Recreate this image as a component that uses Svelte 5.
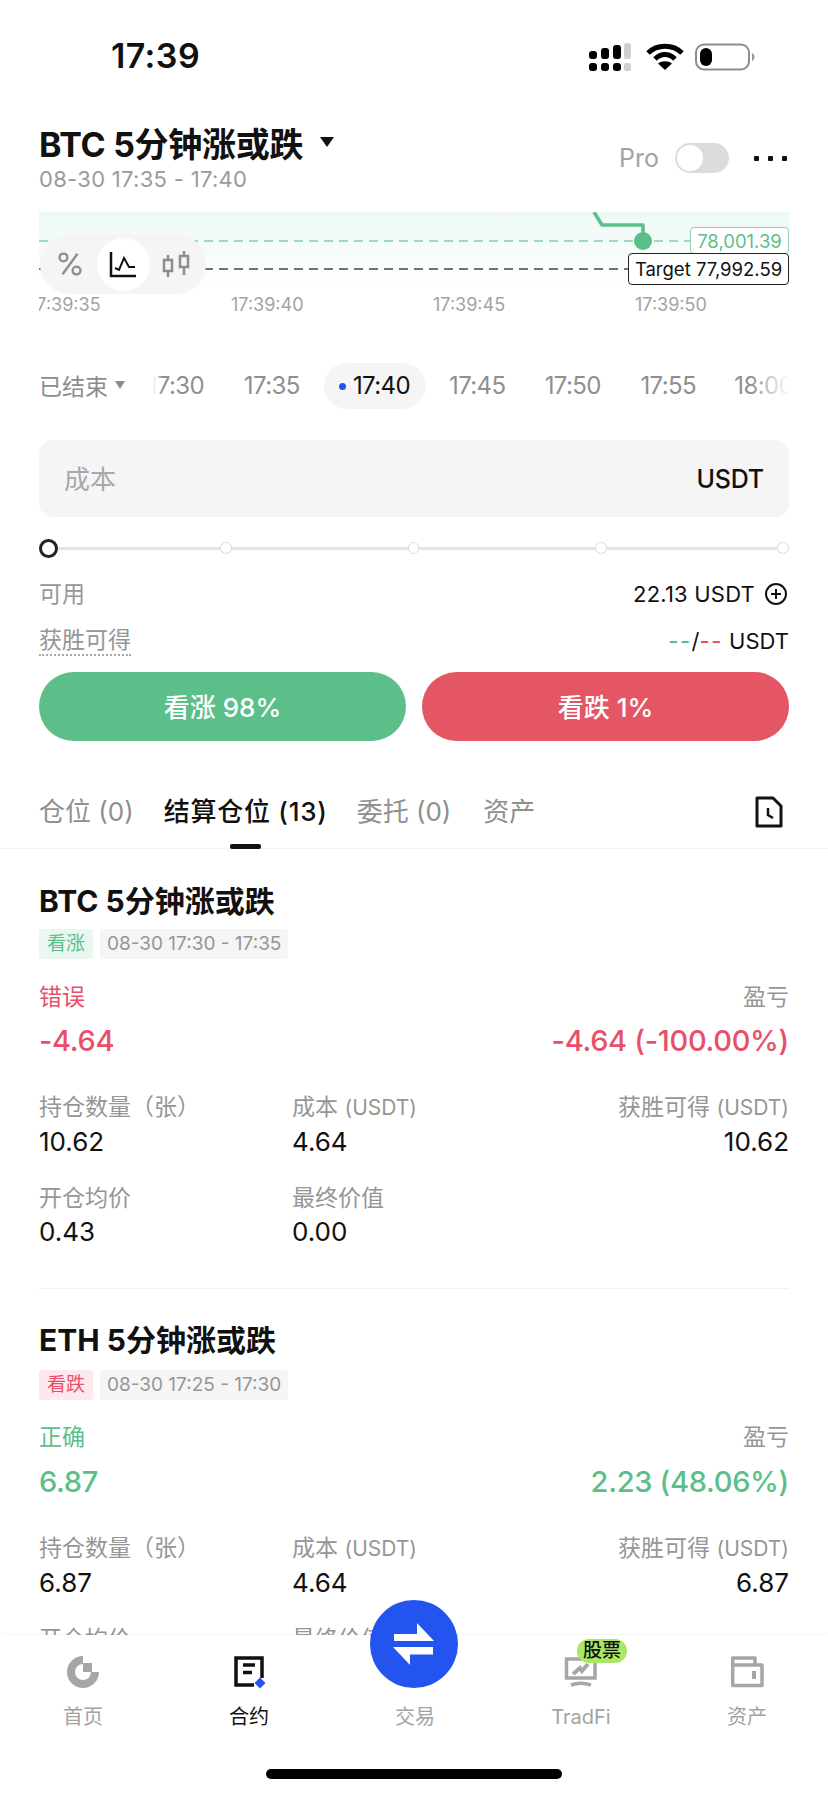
<script>
  const slots = ['17:30', '17:35', '17:40', '17:45', '17:50', '17:55', '18:00'];
  const axis = ['17:39:35', '17:39:40', '17:39:45', '17:39:50'];
  const cards = [
    { name: 'BTC 5分钟涨或跌', side: '看涨', sideCls: 'up', time: '08-30 17:30 - 17:35', result: '错误', tone: 'down', payout: '-4.64', pnl: '-4.64 (-100.00%)', qty: '10.62', cost: '4.64', win: '10.62', avg: '0.43', final: '0.00' },
    { name: 'ETH 5分钟涨或跌', side: '看跌', sideCls: 'down', time: '08-30 17:25 - 17:30', result: '正确', tone: 'up', payout: '6.87', pnl: '2.23 (48.06%)', qty: '6.87', cost: '4.64', win: '6.87', avg: '0.68', final: '6.87' }
  ];
</script>

<div class="screen">
  <div class="content">
    <div class="status">
      <span class="clock">17:39</span>
      <div class="status-icons">
        <svg class="signal" width="42" height="28" viewBox="0 0 42 28">
          <g fill="#000">
            <rect x="0" y="8" width="8" height="8" rx="3"/><rect x="12" y="5" width="8" height="11" rx="3"/><rect x="24" y="2" width="8" height="14" rx="3"/>
            <rect x="0" y="20" width="8" height="8" rx="3"/><rect x="12" y="20" width="8" height="8" rx="3"/><rect x="24" y="20" width="8" height="8" rx="3"/>
          </g>
          <g fill="#cfcfcf"><rect x="35" y="0" width="7" height="16" rx="2.5"/><rect x="35" y="20" width="7" height="8" rx="2"/></g>
        </svg>
        <svg width="38" height="28" viewBox="0 0 38 28">
          <path d="M2 10C11 1 27 1 36 10" fill="none" stroke="#000" stroke-width="5"/>
          <path d="M9 16C15 10 23 10 29 16" fill="none" stroke="#000" stroke-width="5"/>
          <path d="M19 27L12 20.5C16 17.5 22 17.5 26 20.5Z" fill="#000"/>
        </svg>
        <svg width="60" height="28" viewBox="0 0 60 28">
          <rect x="1" y="1.5" width="53" height="25" rx="8" fill="none" stroke="#8c8c8c" stroke-width="2"/>
          <rect x="5" y="5" width="12" height="18" rx="6" fill="#000"/>
          <path d="M57 10C59 11 59.500 12.500 59.500 14C59.500 15.500 59 17 57 18Z" fill="#9a9a9a"/>
        </svg>
      </div>
    </div>

    <div class="pad">
      <div class="head">
        <div>
          <div class="title"><span>BTC 5分钟涨或跌</span><span class="caret"></span></div>
          <div class="sub">08-30 17:35 - 17:40</div>
        </div>
        <div class="head-right">
          <span class="pro">Pro</span>
          <span class="switch"><i></i></span>
          <span class="dots"><i></i><i></i><i></i></span>
        </div>
      </div>

      <div class="chart">
        <div class="area"></div>
        <svg class="lines" width="750" height="80" viewBox="0 0 750 80">
          <path d="M0 29H750" stroke="#7fd0ac" stroke-width="1.500" stroke-dasharray="9 6" fill="none"/>
          <path d="M0 57H750" stroke="#444" stroke-width="1.500" stroke-dasharray="9 6" fill="none"/>
          <path d="M555 0L563 13H604V29" stroke="#5cbf8a" stroke-width="3.500" fill="none" stroke-linejoin="round"/>
          <circle cx="604" cy="29" r="9" fill="#5cbf8a"/>
        </svg>
        <span class="tag now">78,001.39</span>
        <span class="tag target">Target 77,992.59</span>
        <div class="modes">
          <span class="mode">
            <svg width="28" height="28" viewBox="0 0 30 30" fill="none" stroke="#8d8d8d" stroke-width="2.500"><circle cx="8" cy="8" r="4.200"/><circle cx="22" cy="22" r="4.200"/><path d="M23 4L7 26"/></svg>
          </span>
          <span class="mode on">
            <svg width="30" height="30" viewBox="0 0 30 30" fill="none" stroke="#111" stroke-width="2.500"><path d="M3 3V27H28"/><path d="M7 19L11 21L16 9L21 18H27" stroke-width="2"/></svg>
          </span>
          <span class="mode">
            <svg width="30" height="30" viewBox="0 0 30 30" fill="none" stroke="#8d8d8d" stroke-width="2.500"><rect x="3" y="11" width="8" height="11"/><path d="M7 6V11M7 22V28"/><rect x="19" y="7" width="8" height="11"/><path d="M23 2V7M23 18V26"/></svg>
          </span>
        </div>
        <div class="axis">
          {#each axis as t}<span>{t}</span>{/each}
        </div>
      </div>

      <div class="slots">
        <span class="ended">已结束<i class="mini-caret"></i></span>
        <div class="slot-list">
          {#each slots as s}
            <span class="slot" class:active={s === '17:40'}>{#if s === '17:40'}<i class="live"></i>{/if}{s}</span>
          {/each}
        </div>
      </div>

      <div class="input"><span class="ph">成本</span><span class="unit">USDT</span></div>

      <div class="slider">
        <i class="knob"></i><i class="tick"></i><i class="tick"></i><i class="tick"></i><i class="tick"></i>
      </div>

      <div class="row first">
        <span class="muted cjk">可用</span>
        <span class="avail">22.13 USDT
          <svg width="24" height="24" viewBox="0 0 24 24" fill="none" stroke="#111" stroke-width="2"><circle cx="12" cy="12" r="10"/><path d="M12 7V17M7 12H17"/></svg>
        </span>
      </div>
      <div class="row second">
        <span class="muted dotted">获胜可得</span>
        <span class="payout"><b class="g">--</b>/<b class="r">--</b> USDT</span>
      </div>

      <div class="actions">
        <span class="btn buy">看涨 98%</span>
        <span class="btn sell">看跌 1%</span>
      </div>
    </div>

    <div class="tabs">
      <span class="tab">仓位 (0)</span>
      <span class="tab active">结算仓位 (13)</span>
      <span class="tab">委托 (0)</span>
      <span class="tab">资产</span>
      <svg class="history" width="28" height="32" viewBox="0 0 28 32" fill="none" stroke="#111" stroke-width="3"><path d="M2 2H18L26 10V30H2Z" stroke-linejoin="round"/><path d="M13 12V19L18 22" stroke-width="2.500"/></svg>
    </div>

    <div class="cards">
      {#each cards as c}
        <div class="card">
          <div class="card-title">{c.name}</div>
          <div class="chips"><span class="chip {c.sideCls}">{c.side}</span><span class="chip time">{c.time}</span></div>
          <div class="row res"><span class="cjk {c.tone}">{c.result}</span><span class="muted cjk">盈亏</span></div>
          <div class="row vals {c.tone}"><span>{c.payout}</span><span>{c.pnl}</span></div>
          <div class="grid">
            <span class="muted">持仓数量（张）</span><span class="muted">成本 <em>(USDT)</em></span><span class="muted end">获胜可得 <em>(USDT)</em></span>
            <span class="num">{c.qty}</span><span class="num">{c.cost}</span><span class="num end">{c.win}</span>
            <span class="muted r2">开仓均价</span><span class="muted r2">最终价值</span><span></span>
            <span class="num">{c.avg}</span><span class="num">{c.final}</span><span></span>
          </div>
        </div>
      {/each}
    </div>
  </div>

  <nav class="nav">
    <div class="nav-item">
      <svg width="36" height="36" viewBox="0 0 36 36" fill="none"><path d="M18 6A12 12 0 1 0 30 18" stroke="#a6a6a6" stroke-width="8"/><path d="M18 9H27V18H18Z" fill="#a6a6a6"/></svg>
      <span>首页</span>
    </div>
    <div class="nav-item cur">
      <svg width="36" height="36" viewBox="0 0 36 36" fill="none"><path d="M31 24V4H5V31H23" stroke="#111" stroke-width="3.500"/><path d="M12 11H24M12 18.500H21" stroke="#111" stroke-width="3.500"/><path d="M29 23.500L34.500 29L29 34.500L23.500 29Z" fill="#2354ef"/></svg>
      <span>合约</span>
    </div>
    <div class="nav-item">
      <span class="spacer"></span>
      <span>交易</span>
    </div>
    <div class="nav-item">
      <svg width="36" height="36" viewBox="0 0 36 36" fill="none"><path d="M3.500 5H32V24H3.500Z" stroke="#a6a6a6" stroke-width="3.500"/><path d="M8 31C14 29 22 29 28 31" stroke="#a6a6a6" stroke-width="3.500"/><path d="M10 20L17 14L19 17L25 10" stroke="#a6a6a6" stroke-width="4"/></svg>
      <span>TradFi</span>
      <b class="badge">股票</b>
    </div>
    <div class="nav-item">
      <svg width="36" height="36" viewBox="0 0 36 36" fill="none" stroke="#a6a6a6" stroke-width="3.500"><path d="M3.700 4H26V11H33V31.500H3.700Z" stroke-linejoin="round"/><path d="M3.700 11H26"/><path d="M25 17V25" stroke-width="4"/></svg>
      <span>资产</span>
    </div>
    <button class="trade" aria-label="交易">
      <svg width="46" height="46" viewBox="0 0 46 46" fill="#fff"><path d="M3 13H26V2L43 20H3Z"/><path d="M2 26H42V33.500H19V44Z"/></svg>
    </button>
    <i class="home-bar"></i>
  </nav>
</div>

<style>
  :global(body) { margin: 0; background: #fff; }
  .screen {
    width: 828px; height: 1795px; display: flex; flex-direction: column; overflow: hidden; background: #fff;
    font-family: Inter, "Noto Sans CJK SC", sans-serif; color: #111;
  }
  .content { height: 1635px; overflow: hidden; flex: none; }
  .status { height: 112px; display: flex; align-items: center; justify-content: space-between; padding: 0 73px 0 111px; box-sizing: border-box; }
  .clock { font-size: 34px; font-weight: 600; line-height: 40px; letter-spacing: .4px; }
  .status-icons { display: flex; align-items: center; gap: 11px; margin-top: 1px; }
  .signal { margin-right: 4px; }

  .pad { padding: 0 39px; }
  .head { display: flex; justify-content: space-between; align-items: flex-end; margin-top: 11px; }
  .title { font-size: 34px; line-height: 40px; font-weight: 700; letter-spacing: -.3px; display: flex; align-items: center; }
  .title > span:first-child { position: relative; top: 2px; }
  .caret { width: 0; height: 0; margin: -2px 0 0 17px; border: 7px solid transparent; border-top: 10px solid #111; border-bottom: 0; }
  .sub { font-size: 22px; line-height: 30px; color: #9a9a9a; letter-spacing: .3px; padding-top: 1px; margin-bottom: -1px; }
  .head-right { display: flex; align-items: center; padding-bottom: 20px; margin-right: 2px; }
  .pro { font-size: 25px; color: #a3a3a3; margin-right: 16px; }
  .switch { width: 54px; height: 30px; border-radius: 15px; background: #dcdcdc; display: block; position: relative; margin-right: 25px; }
  .switch i { position: absolute; left: 2px; top: 2px; width: 26px; height: 26px; border-radius: 50%; background: #fff; }
  .dots { display: flex; gap: 9px; }
  .dots i { width: 5px; height: 5px; background: #111; border-radius: 1px; }

  .chart { position: relative; margin-top: 19px; height: 108px; }
  .area { position: absolute; left: 0; right: 0; top: 0; height: 80px; background: linear-gradient(#eef9f5, #ffffff); }
  .lines { position: absolute; left: 0; top: 0; }
  .tag { position: absolute; box-sizing: border-box; right: 0; font-size: 18.500px; background: #fff; display: flex; align-items: center; justify-content: center; border-radius: 4px; }
  .now { top: 15px; width: 99px; height: 27px; color: #5cbf8a; border: 1px solid #8ed3b3; }
  .target { top: 41px; width: 161px; height: 32px; color: #111; border: 1px solid #222; }
  .modes { position: absolute; left: 1px; top: 22px; width: 166px; height: 60px; border-radius: 30px; background: #f5f5f5; display: flex; align-items: center; justify-content: center; }
  .mode { width: 53px; height: 53px; display: flex; align-items: center; justify-content: center; border-radius: 50%; }
  .mode.on { background: #fff; }
  .axis { position: absolute; left: 0; right: 0; top: 81px; height: 24px; display: flex; overflow: hidden; font-size: 18px; line-height: 24px; color: #a3a3a3; }
  .axis span { width: 202px; flex: none; }
  .axis span:first-child { margin-left: -10px; }

  .slots { display: flex; align-items: center; height: 46px; margin-top: 43px; }
  .ended { flex: none; font-size: 23px; color: #8c8c8c; display: flex; align-items: center; width: 114px; padding-bottom: 2px; box-sizing: border-box; }
  .mini-caret { width: 0; height: 0; margin-left: 7px; border: 5.500px solid transparent; border-top: 8px solid #8c8c8c; border-bottom: 0; }
  .slot-list { flex: 1; display: flex; align-items: center; height: 46px; overflow: hidden; position: relative; font-size: 24px; letter-spacing: -.6px; color: #8f8f8f; }
  .slot { flex: none; width: 95.500px; text-align: center; line-height: 46px; }
  .slot:first-child { width: 71px; box-sizing: border-box; padding-right: 20px; display: flex; justify-content: flex-end; overflow: hidden; }
  .slot.active { width: 102px; margin: 0 4px; border-radius: 23px; background: #f5f5f5; color: #111; display: flex; align-items: center; justify-content: center; }
  .live { width: 7px; height: 7px; border-radius: 50%; background: #2354ef; margin-right: 7px; }
  .slot-list::before { content: ""; position: absolute; z-index: 1; left: 0; top: 0; bottom: 0; width: 10px; background: linear-gradient(90deg, #fff, rgba(255,255,255,0)); }
  .slot-list::after { content: ""; position: absolute; right: 0; top: 0; bottom: 0; width: 40px; background: linear-gradient(90deg, rgba(255,255,255,0), #fff); }

  .input { height: 77px; margin-top: 31px; border-radius: 14px; background: #f5f5f5; display: flex; align-items: center; justify-content: space-between; padding: 0 25px; font-size: 26px; }
  .ph { color: #a8a8a8; padding-bottom: 2px; }
  .unit { font-weight: 500; font-size: 25px; letter-spacing: -.2px; }
  .slider { height: 20px; margin-top: 21px; display: flex; align-items: center; background: linear-gradient(#e4e4e4, #e4e4e4) center/100% 3px no-repeat; }
  .knob { width: 19px; height: 19px; box-sizing: border-box; border: 3px solid #222; border-radius: 50%; background: #fff; }
  .tick { width: 12px; height: 12px; box-sizing: border-box; border: 1.500px solid #dcdcdc; border-radius: 50%; background: #fff; margin-left: 176px; }
  .knob + .tick { margin-left: 162px; }
  .tick:last-child { margin-left: 170px; }

  .row { display: flex; align-items: center; justify-content: space-between; }
  .row.first, .row.second { height: 30px; font-size: 23px; }
  .row.first { margin-top: 21px; }
  .row.second { margin-top: 17px; }
  .muted { color: #969696; }
  .cjk { padding-bottom: 4px; }
  .dotted { border-bottom: 2px dotted #a8a8a8; line-height: 28px; height: 28px; }
  .avail { display: flex; align-items: center; gap: 9px; font-size: 22px; letter-spacing: .2px; margin-right: 1px; }
  .payout { font-size: 22px; }
  .payout b { font-weight: 500; letter-spacing: 1.500px; }
  .g { color: #5cbf8a; }
  .r { color: #e8506a; }

  .actions { display: grid; grid-template-columns: 1fr 1fr; gap: 16px; margin-top: 16px; }
  .btn { height: 69px; box-sizing: border-box; padding-bottom: 3px; border-radius: 35px; display: flex; align-items: center; justify-content: center; color: #fff; font-size: 26px; font-weight: 500; }
  .buy { background: #5cbf8a; }
  .sell { background: #e55664; }

  .tabs { margin-top: 35px; padding: 0 45px 0 39px; display: flex; align-items: center; gap: 32px; border-bottom: 1px solid #f2f2f2; position: relative; height: 72px; }
  .tab { font-size: 26px; line-height: 36px; color: #8f8f8f; position: relative; }
  .tab:first-child { margin-right: -2px; }
  .tab.active { color: #111; font-weight: 500; letter-spacing: .75px; margin-right: -3px; }
  .tab.active::after { content: ""; position: absolute; left: 50%; margin-left: -16px; bottom: -19px; width: 31px; height: 5px; border-radius: 2px; background: #111; }
  .history { margin-left: auto; }

  .cards { padding: 0 39px; }
  .card { padding: 32px 0 39px; border-bottom: 1px solid #f2f2f2; }
  .card + .card { padding-top: 31px; }
  .card + .card .chips { margin-top: 10px; }
  .card + .card .res { margin-top: 22px; }
  .card + .card .vals { margin-top: 9px; }
  .card-title { font-size: 30px; line-height: 40px; font-weight: 700; }
  .chips { display: flex; gap: 7px; margin-top: 8px; }
  .chip { height: 30px; line-height: 30px; font-size: 19px; padding: 0 8px; border-radius: 3px; }
  .chip.time { padding: 0 7px; background: #f5f5f5; color: #969696; }
  .chip.up { background: #e9f7f0; color: #5cbf8a; }
  .chip.down { background: #fde9ec; color: #e8506a; }
  .res { height: 30px; margin-top: 23px; font-size: 23px; }
  .up { color: #5cbf8a; }
  .down { color: #e8506a; }
  .vals { height: 40px; margin-top: 8px; font-size: 29px; font-weight: 500; letter-spacing: -.3px; }
  .grid { display: grid; grid-template-columns: 253px 1fr auto; margin-top: 32px; font-size: 23px; }
  .grid span { line-height: 30px; }
  .grid em { font-style: normal; font-size: 21px; }
  .grid .num { font-size: 26px; line-height: 34px; margin-top: 2px; color: #111; }
  .grid .r2 { margin-top: 24px; }
  .end { text-align: right; }

  .nav { position: relative; flex: none; height: 160px; background: #fff; box-shadow: 0 -1px 3px rgba(0,0,0,.04); display: flex; align-items: flex-start; justify-content: space-around; padding: 19px 0 0 0; box-sizing: border-box; }
  .nav-item { position: relative; width: 166px; flex: none; display: flex; flex-direction: column; align-items: center; font-size: 20px; color: #a3a3a3; line-height: 26px; gap: 14px; }
  .nav-item.cur { color: #111; }
  .spacer { height: 36px; }
  .badge { position: absolute; left: 79px; top: -15px; width: 50px; height: 24px; border-radius: 12px; background: #a9e765; color: #111; font-size: 19px; line-height: 24px; font-weight: 500; text-align: center; }
  .trade { position: absolute; left: 370px; top: -35px; width: 88px; height: 88px; border-radius: 50%; border: 0; padding: 0; background: #2354ef; display: flex; align-items: center; justify-content: center; }
  .home-bar { position: absolute; left: 266px; top: 134px; width: 296px; height: 10px; border-radius: 5px; background: #000; }
</style>
